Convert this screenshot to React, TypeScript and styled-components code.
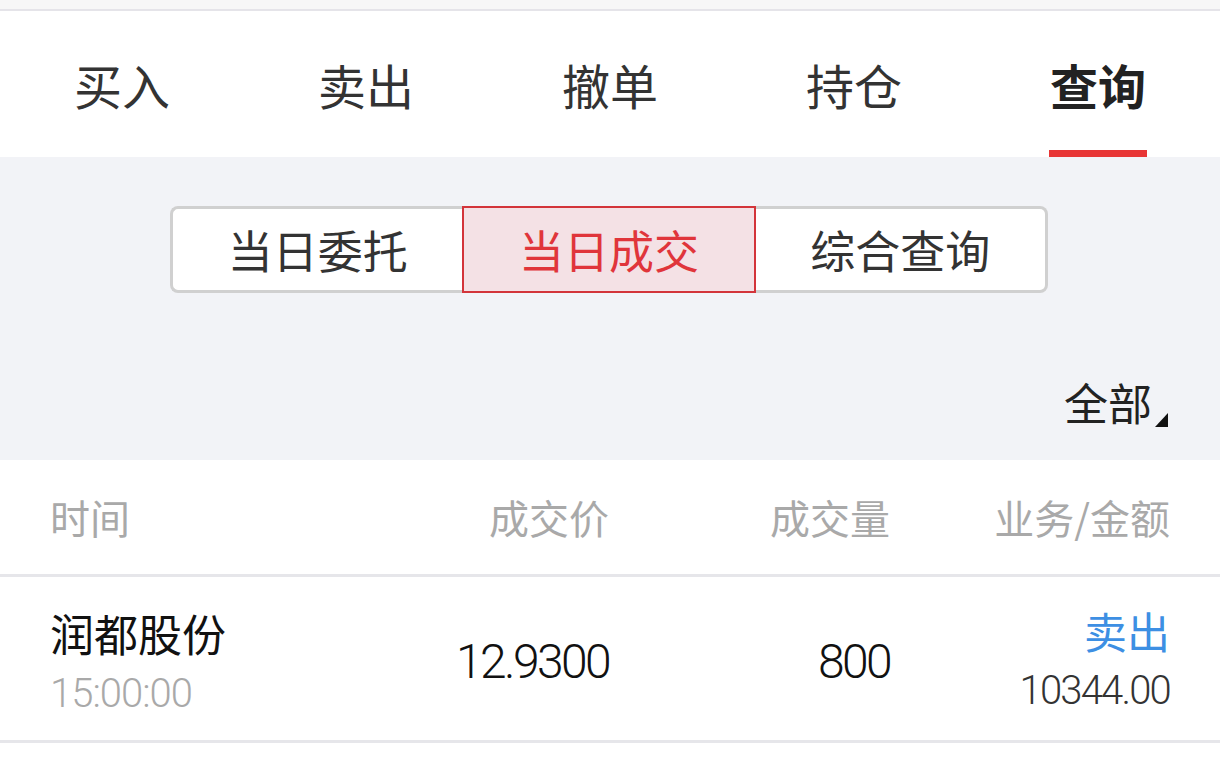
import styled, { createGlobalStyle } from 'styled-components';

const GlobalStyle = createGlobalStyle`
  html, body {
    margin: 0;
    padding: 0;
    background: #ffffff;
  }
  body {
    font-family: "Noto Sans CJK SC", "Noto Sans", sans-serif;
  }
`;

const tabs = ['买入', '卖出', '撤单', '持仓', '查询'];
const segments = ['当日委托', '当日成交', '综合查询'];

const Page = styled.div`
  width: 1220px;
  height: 761px;
  overflow: hidden;
  display: flex;
  flex-direction: column;
  background: #ffffff;
`;

const StatusStrip = styled.div`
  height: 9px;
  background: #f7f7f7;
  border-bottom: 2px solid #e5e4e9;
`;

const TabBar = styled.div`
  display: flex;
  height: 146px;
  background: #ffffff;
`;

const Tab = styled.div`
  flex: 1;
  display: flex;
  flex-direction: column;
  align-items: center;
  justify-content: flex-end;
`;

const TabLabel = styled.span<{ $active?: boolean }>`
  font-size: 48px;
  line-height: 48px;
  padding: 0 1px 42px;
  color: ${p => (p.$active ? '#222222' : '#333333')};
  font-weight: ${p => (p.$active ? 700 : 400)};
  border-bottom: 7px solid ${p => (p.$active ? '#e83535' : 'transparent')};
`;

const FilterArea = styled.div`
  background: #f2f3f7;
  padding-top: 49px;
  height: 303px;
  box-sizing: border-box;
  display: flex;
  flex-direction: column;
  align-items: center;
`;

const Segmented = styled.div`
  display: flex;
  width: 878px;
  height: 87px;
  margin-left: -2px;
`;

const Segment = styled.div<{ $active?: boolean; $first?: boolean; $last?: boolean }>`
  flex: 1 1 0;
  display: flex;
  align-items: center;
  justify-content: center;
  box-sizing: border-box;
  font-size: 45px;
  background: #ffffff;
  color: #333333;
  border: 3px solid #d0d0d0;
  border-left-width: ${p => (p.$first ? '3px' : '0')};
  border-right-width: ${p => (p.$last ? '3px' : '0')};
  border-radius: ${p => (p.$first ? '8px 0 0 8px' : p.$last ? '0 8px 8px 0' : '0')};

  ${p =>
    p.$active &&
    `
    border: 2px solid #d3343a;
    background: #f4e1e5;
    color: #e0353b;
  `}
`;

const FilterRow = styled.div`
  align-self: stretch;
  display: flex;
  justify-content: flex-end;
  align-items: flex-end;
  margin-top: 87px;
  padding-right: 52px;
`;

const FilterLabel = styled.span`
  font-size: 44px;
  line-height: 44px;
  color: #222222;
`;

const Caret = styled.svg`
  width: 13px;
  height: 14px;
  margin-left: 3px;
  margin-bottom: -3px;
`;

const Table = styled.div`
  display: flex;
  flex-direction: column;
`;

const HeaderRow = styled.div`
  display: grid;
  grid-template-columns: 1fr 200px 281px 280px;
  align-items: center;
  height: 114px;
  padding: 0 50px;
  border-bottom: 3px solid #e6e6ea;
`;

const HeaderCell = styled.span<{ $right?: boolean }>`
  font-size: 40px;
  color: #a9a9a9;
  text-align: ${p => (p.$right ? 'right' : 'left')};
`;

const DataRow = styled.div`
  display: grid;
  grid-template-columns: 1fr 200px 281px 280px;
  align-items: center;
  height: 163px;
  padding: 0 50px;
  border-bottom: 3px solid #e6e6ea;
`;

const Stack = styled.div<{ $right?: boolean }>`
  display: flex;
  flex-direction: column;
  align-items: ${p => (p.$right ? 'flex-end' : 'flex-start')};
  padding-top: 6px;
`;

const StockName = styled.span`
  font-size: 44px;
  line-height: 48px;
  color: #111111;
  margin-bottom: 17px;
`;

const Numeric = styled.span<{ $size: number; $color: string; $spacing: number }>`
  font-family: Roboto, "Liberation Sans", sans-serif;
  font-weight: 300;
  font-size: ${p => p.$size}px;
  line-height: ${p => p.$size}px;
  letter-spacing: ${p => p.$spacing}px;
  color: ${p => p.$color};
`;

const NumberCell = styled.div`
  text-align: right;
  padding-top: 6px;
`;

const SideLabel = styled.span`
  font-size: 43px;
  line-height: 48px;
  color: #3d8fe3;
  margin-bottom: 17px;
  margin-top: -6px;
`;

export default function App() {
  return (
    <Page>
      <GlobalStyle />
      <StatusStrip />
      <TabBar>
        {tabs.map((t, i) => (
          <Tab key={t}>
            <TabLabel $active={i === tabs.length - 1}>{t}</TabLabel>
          </Tab>
        ))}
      </TabBar>

      <FilterArea>
        <Segmented>
          {segments.map((s, i) => (
            <Segment key={s} $active={i === 1} $first={i === 0} $last={i === segments.length - 1}>
              {s}
            </Segment>
          ))}
        </Segmented>
        <FilterRow>
          <FilterLabel>全部</FilterLabel>
          <Caret viewBox="0 0 13 14">
            <polygon points="13,0 13,14 0,14" fill="#111111" />
          </Caret>
        </FilterRow>
      </FilterArea>

      <Table>
        <HeaderRow>
          <HeaderCell>时间</HeaderCell>
          <HeaderCell $right>成交价</HeaderCell>
          <HeaderCell $right>成交量</HeaderCell>
          <HeaderCell $right>业务/金额</HeaderCell>
        </HeaderRow>
        <DataRow>
          <Stack>
            <StockName>润都股份</StockName>
            <Numeric $size={40} $color="#a9a9a9" $spacing={-1}>15:00:00</Numeric>
          </Stack>
          <NumberCell>
            <Numeric $size={48} $color="#111111" $spacing={-2.6}>12.9300</Numeric>
          </NumberCell>
          <NumberCell>
            <Numeric $size={48} $color="#111111" $spacing={-2.6}>800</Numeric>
          </NumberCell>
          <Stack $right>
            <SideLabel>卖出</SideLabel>
            <Numeric $size={40} $color="#333333" $spacing={-1.8}>10344.00</Numeric>
          </Stack>
        </DataRow>
      </Table>
    </Page>
  );
}
